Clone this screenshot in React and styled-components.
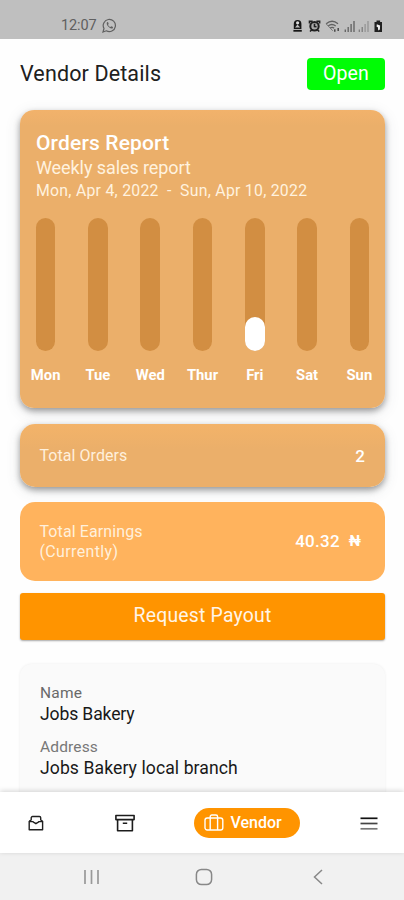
import React from 'react';
import styled, { createGlobalStyle } from 'styled-components';

const GlobalStyle = createGlobalStyle`
  * {
    box-sizing: border-box;
  }

  body {
    margin: 0;
    background: #fff;
    font-family: Roboto, 'Noto Sans', sans-serif;
  }
`;

const Screen = styled.div`
  width: 404px;
  height: 900px;
  display: flex;
  flex-direction: column;
  overflow: hidden;
  background: #fefefe;
`;

const StatusBar = styled.div`
  height: 39px;
  flex-shrink: 0;
  display: flex;
  justify-content: space-between;
  padding: 11px 20px 0 61px;
  background: #bfbfbf;
  color: #606060;
`;

const StatusGroup = styled.div`
  display: flex;
  align-items: center;
  height: 29px;
  gap: 5px;
`;

const Text = styled.span`
  display: block;
  white-space: nowrap;
  font-family: Roboto, 'Noto Sans', sans-serif;
  font-size: ${(props) => props.$size}px;
  line-height: ${(props) => props.$line || 20}px;
  font-weight: ${(props) => props.$weight || 400};
  letter-spacing: ${(props) => props.$spacing || 0}px;
  color: ${(props) => props.$color || '#fff'};
`;

const Content = styled.main`
  flex: 1;
  min-height: 0;
  overflow: hidden;
  padding: 19px 19px 0 20px;
`;

const Header = styled.header`
  display: flex;
  justify-content: space-between;
  align-items: center;
  height: 32px;
`;

const OpenBadge = styled.div`
  width: 78px;
  height: 32px;
  display: flex;
  align-items: center;
  justify-content: center;
  border-radius: 4px;
  background: #00fc05;
`;

const ReportCard = styled.section`
  height: 298.5px;
  margin-top: 19.5px;
  padding-top: 21.5px;
  border-radius: 14px;
  background: linear-gradient(#f2b26b 0, #ebaf6a 16px, #ebaf6a 100%);
  box-shadow: 0 3px 6px rgba(0, 0, 0, 0.36), 0 4px 16px rgba(60, 70, 85, 0.13);
`;

const ReportHeading = styled.div`
  padding-left: 16px;
`;

const Chart = styled.div`
  display: grid;
  grid-template-columns: repeat(7, 1fr);
  margin: 18px -0.5px 0;
`;

const Day = styled.div`
  display: flex;
  flex-direction: column;
  align-items: center;
  gap: 14px;
`;

const Track = styled.div`
  width: 19.5px;
  height: 133px;
  display: flex;
  align-items: flex-end;
  border-radius: 10px;
  background: #d28e42;
`;

const Fill = styled.div`
  width: 100%;
  border-radius: 10px;
  background: #fff;
`;

const SummaryCard = styled.section`
  height: ${(props) => props.$height}px;
  margin-top: ${(props) => props.$top}px;
  display: flex;
  align-items: center;
  justify-content: space-between;
  padding: 0 ${(props) => props.$right || 20}px 0 19.5px;
  border-radius: 15px;
  background: ${(props) => (props.$flat ? '#ffb35d' : 'linear-gradient(#f3b369 0, #ebaf6a 25px)')};
  box-shadow: ${(props) =>
    props.$flat ? 'none' : '0 3px 6px rgba(0, 0, 0, 0.36), 0 4px 15px rgba(60, 70, 85, 0.12)'};
`;

const EarningsLabel = styled.div`
  padding-top: 2px;
`;

const Amount = styled.div`
  display: flex;
  gap: 9px;
`;

const PayoutButton = styled.button`
  width: 100%;
  height: 47px;
  margin-top: 12px;
  padding: 0;
  display: flex;
  align-items: center;
  justify-content: center;
  border: 0;
  border-radius: 3px;
  background: #ff9400;
  box-shadow: 0 1px 2px rgba(0, 0, 0, 0.35);
`;

const InfoCard = styled.section`
  height: 160px;
  margin-top: 24px;
  padding: 20.5px 20px 0;
  border-radius: 12px;
  background: #fafafa;
  box-shadow: 0 0 3px rgba(0, 0, 0, 0.07);
`;

const InfoItem = styled.div`
  margin-bottom: 12px;
`;

const TabBar = styled.nav`
  position: relative;
  height: 61px;
  flex-shrink: 0;
  display: grid;
  grid-template-columns: 72px 105px 139px 1fr;
  align-items: center;
  justify-items: center;
  background: #fff;
  box-shadow: 0 -1px 5px rgba(0, 0, 0, 0.17);

  svg {
    display: block;
  }

  > svg:last-child {
    margin-left: 18px;
  }
`;

const VendorTab = styled.div`
  width: 106px;
  height: 30px;
  display: flex;
  align-items: center;
  gap: 7px;
  padding-left: 10px;
  border-radius: 15px;
  background: #ff9400;
`;

const SystemBar = styled.div`
  height: 47px;
  flex-shrink: 0;
  display: grid;
  grid-template-columns: 182px 44px 1fr;
  justify-items: center;
  align-items: center;
  background: #f1f1f1;

  svg:last-child {
    justify-self: start;
    margin-left: 87px;
  }
`;

const days = [
  { name: 'Mon', value: 0 },
  { name: 'Tue', value: 0 },
  { name: 'Wed', value: 0 },
  { name: 'Thur', value: 0 },
  { name: 'Fri', value: 25.5 },
  { name: 'Sat', value: 0 },
  { name: 'Sun', value: 0 },
];

function WhatsappIcon() {
  return (
    <svg width="15" height="15" viewBox="0 0 15 15" fill="none" stroke="#606060" strokeWidth="1.2">
      <path d="M1 14l1-3.5a6.1 6.1 0 1 1 2.3 2.3z" />
      <path d="M5 4.2c-.8 1.4.1 3.1 1.5 4.5s3.1 2.4 4.3 1.5l.2-1.1-1.7-.9-.9.8C7.2 8.6 6.4 7.7 6 6.7l.7-.8L6 4.1z" fill="#606060" stroke="none" />
    </svg>
  );
}

function StatusIcons() {
  return (
    <svg width="92" height="16" viewBox="0 0 92 16" fill="none">
      <path d="M1.8 11V5.8a3.8 3.8 0 0 1 7.6 0V11z" fill="#161616" />
      <path d="M1.4 12.8h8.4" stroke="#161616" strokeWidth="1.8" />
      <path d="M3 9.4l2.5-3 2.7 3z" fill="#bfbfbf" />
      <circle cx="5.6" cy="4.8" r="1.6" fill="#ddd" />
      <circle cx="22.5" cy="8.3" r="4.2" fill="#aaa" stroke="#202020" strokeWidth="2" />
      <path d="M17.5 5.4V3.2h3.2M27.6 5.4V3.2h-3.2M18 13.5l2-1.8M27.2 13.5l-2-1.8M22.5 5.8v2.7l2 .2" stroke="#202020" strokeWidth="1.6" />
      <path d="M34.2 5.8c3.7-3.2 8.1-3.2 11.8 0M36.1 8c2.5-2 5.1-2 7.6 0M38.1 10.1c1.3-.9 2.7-.9 4 0" stroke="#616161" strokeWidth="1.3" />
      <path d="M40.8 12.8l-6.6-6.9" stroke="#777" />
      <path d="M42.8 11.2v2.6M46.2 10v3" stroke="#484848" strokeWidth="1.5" />
      <path d="M53.3 11.5V14M56.2 9v5M59.1 6v8M62 3v11" stroke="#666" strokeWidth="1.4" />
      <path d="M67.3 11.5V14M70.2 9v5" stroke="#777" strokeWidth="1.2" />
      <path d="M73.1 6v8M76 3v11" stroke="#919191" strokeWidth="1.2" />
      <path d="M82.5 4h2V2.4h3.6V4H90v10h-7.5z" fill="#202020" />
      <path d="M84.8 6.2l3.3 1.3-.2 4.1-1.7.8-.3-3.2-1.3-.4z" fill="#eee" />
    </svg>
  );
}

function InboxIcon() {
  return (
    <svg width="16" height="16" viewBox="0 0 16 16" fill="none" stroke="#202020" strokeWidth="1.4" strokeLinejoin="round">
      <path d="M1.2 6.1v8.7h13.4V6.1" />
      <path d="M1.2 6.1l2-1.1V2.8a1.3 1.3 0 0 1 1.3-1.3h6.9a1.3 1.3 0 0 1 1.3 1.3V5l1.9 1.1" />
      <path d="M1.2 6.6h3.6l1.5 1.1 1.6 1 1.6-1L11 6.6h3.6" />
    </svg>
  );
}

function ArchiveIcon() {
  return (
    <svg width="20" height="18" viewBox="0 0 20 18" fill="none" stroke="#1c1c1c" strokeWidth="1.6" strokeLinejoin="round">
      <path d="M.9 1.5h18.2v4.1H.9zM2.6 5.6v11.2h14.8V5.6M7.8 9.2h4.4" />
    </svg>
  );
}

function CaseIcon() {
  return (
    <svg width="20" height="17" viewBox="0 0 20 17" fill="none" stroke="#fff" strokeWidth="1.4">
      <rect x="1" y="4" width="17.8" height="12" rx="2.2" />
      <path d="M6.2 16V2.7A1.7 1.7 0 0 1 7.9 1h4a1.7 1.7 0 0 1 1.7 1.7V16" />
    </svg>
  );
}

function MenuIcon() {
  return (
    <svg width="18" height="14" viewBox="0 0 18 14" fill="none" strokeWidth="1.7">
      <path d="M.5 2.3h17" stroke="#111" />
      <path d="M.5 7.5h17" stroke="#444" />
      <path d="M.5 12.8h17" stroke="#777" />
    </svg>
  );
}

function App() {
  return (
    <>
      <GlobalStyle />
      <Screen>
        <StatusBar>
          <StatusGroup>
            <Text $size={14.5} $spacing={-0.1} $color="#606060">12:07</Text>
            <WhatsappIcon />
          </StatusGroup>
          <StatusGroup>
            <StatusIcons />
          </StatusGroup>
        </StatusBar>

        <Content>
          <Header>
            <Text $size={21.5} $line={30} $spacing={0.13} $color="#202020">Vendor Details</Text>
            <OpenBadge>
              <Text $size={19.5} $line={28} $spacing={0.15}>Open</Text>
            </OpenBadge>
          </Header>

          <ReportCard>
            <ReportHeading>
              <Text $size={21} $line={24} $weight={500} $spacing={0.15}>Orders Report</Text>
              <Text $size={18} $line={26} $spacing={-0.08} $color="#fff2df">Weekly sales report</Text>
              <Text $size={15.8} $line={19} $spacing={0.27} $color="#fff2df">Mon, Apr 4, 2022 &nbsp;-&nbsp; Sun, Apr 10, 2022</Text>
            </ReportHeading>
            <Chart>
              {days.map((day) => (
                <Day key={day.name}>
                  <Track>
                    <Fill style={{ height: `${day.value}%` }} />
                  </Track>
                  <Text $size={14.8} $weight={700}>{day.name}</Text>
                </Day>
              ))}
            </Chart>
          </ReportCard>

          <SummaryCard $height={63} $top={16}>
            <Text $size={16} $spacing={0.06} $color="#fff0dc">Total Orders</Text>
            <Text $size={17} $weight={500}>2</Text>
          </SummaryCard>

          <SummaryCard $height={79} $top={14.5} $right={24} $flat>
            <EarningsLabel>
              <Text $size={16} $spacing={0.1} $color="#fff0dc">Total Earnings</Text>
              <Text $size={16} $spacing={0.35} $color="#fff0dc">(Currently)</Text>
            </EarningsLabel>
            <Amount>
              <Text $size={17} $weight={500} $spacing={0.25}>40.32</Text>
              <Text $size={15} $weight={700}>₦</Text>
            </Amount>
          </SummaryCard>

          <PayoutButton>
            <Text $size={19.4} $line={26} $spacing={0.2} $color="#fff5e7">Request Payout</Text>
          </PayoutButton>

          <InfoCard>
            <InfoItem>
              <Text $size={15.5} $line={19} $spacing={0.2} $color="#696969">Name</Text>
              <Text $size={17.6} $line={23} $spacing={-0.15} $color="#181818">Jobs Bakery</Text>
            </InfoItem>
            <InfoItem>
              <Text $size={15.5} $line={19} $spacing={0.15} $color="#777">Address</Text>
              <Text $size={17.6} $line={23} $spacing={0.08} $color="#181818">Jobs Bakery local branch</Text>
            </InfoItem>
          </InfoCard>
        </Content>

        <TabBar>
          <InboxIcon />
          <ArchiveIcon />
          <VendorTab>
            <CaseIcon />
            <Text $size={16} $weight={500}>Vendor</Text>
          </VendorTab>
          <MenuIcon />
        </TabBar>

        <SystemBar>
          <svg width="17" height="16" viewBox="0 0 17 16" stroke="#999" strokeWidth="1.7">
            <path d="M2 1v14M8.5 1v14M15 1v14" />
          </svg>
          <svg width="18" height="18" viewBox="0 0 18 18" fill="none" stroke="#888" strokeWidth="1.5">
            <rect x="1.4" y="1.4" width="15.2" height="15.2" rx="5" />
          </svg>
          <svg width="10" height="16" viewBox="0 0 10 16" fill="none" stroke="#888" strokeWidth="1.5">
            <path d="M9 1L1.5 8 9 15" />
          </svg>
        </SystemBar>
      </Screen>
    </>
  );
}

export default App;
